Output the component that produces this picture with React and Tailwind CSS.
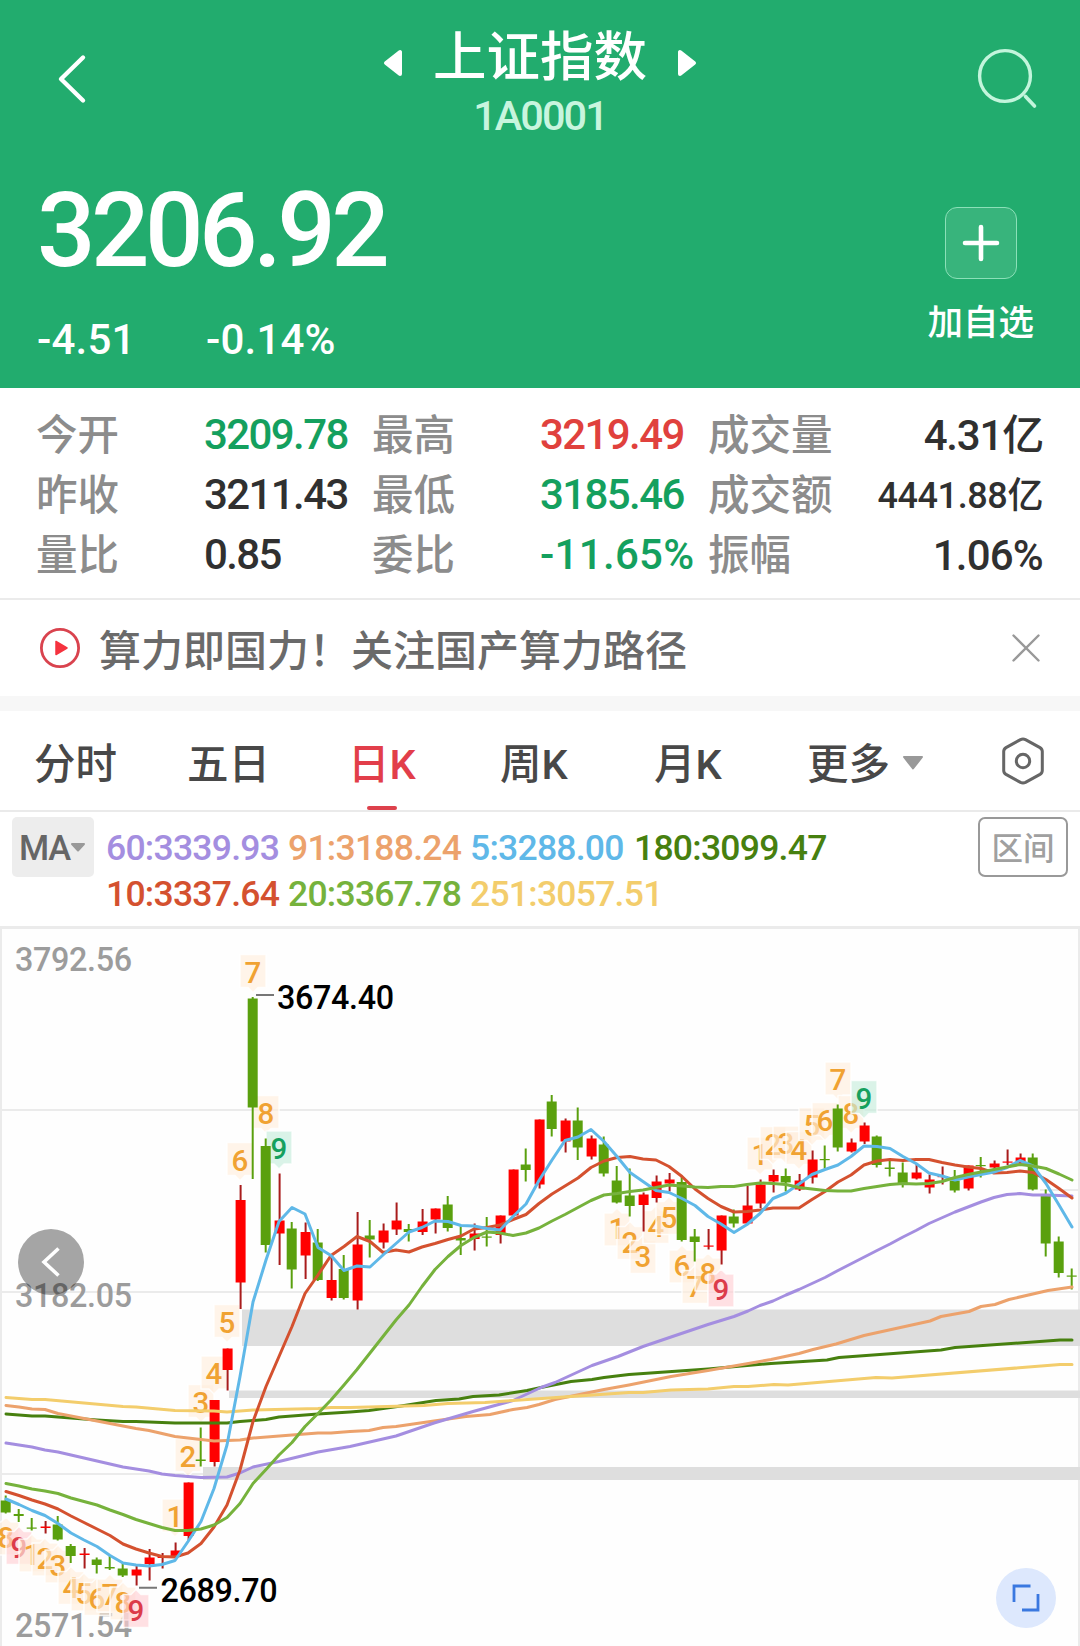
import { useState } from 'react';

const RED = '#ff0000';
const GREEN = '#5aa00e';

// [up, high, low, bodyTop, bodyBottom]
const candles = [
  [0, 1495.5, 1513.5, 1500.5, 1512.5], [0, 1509, 1522, 1514, 1516], [0, 1518, 1530.5, 1527.5, 1528.5],
  [1, 1521, 1533.5, 1526.5, 1528], [0, 1516, 1540.5, 1524.5, 1539.5], [0, 1544, 1563, 1546, 1556],
  [1, 1548, 1568.5, 1553.5, 1555], [0, 1557.5, 1573.5, 1559.5, 1565], [0, 1555, 1570, 1567, 1568.5],
  [0, 1563, 1577, 1568.5, 1575.5], [1, 1566, 1585.5, 1569.5, 1575.5], [1, 1549, 1580.5, 1557.5, 1564],
  [1, 1553, 1568.5, 1556.5, 1558], [1, 1542.5, 1557, 1550.5, 1557], [1, 1482.5, 1540, 1482.5, 1536],
  [0, 1427.5, 1466.5, 1459.5, 1461], [1, 1400, 1466.5, 1400, 1462], [1, 1348.5, 1390.5, 1348.5, 1370],
  [1, 1185, 1309, 1200, 1282.5], [0, 997, 1179, 998.5, 1107.5], [0, 1138.5, 1252.5, 1146, 1245],
  [1, 1173.5, 1265, 1220.5, 1233.5], [0, 1222, 1288.5, 1228.5, 1269.5], [1, 1222.5, 1279, 1232, 1255.5],
  [0, 1229, 1281, 1242.5, 1280], [1, 1255, 1300.5, 1280, 1298], [0, 1255, 1299.5, 1269, 1298],
  [1, 1212, 1309.5, 1244.5, 1300.5], [0, 1220, 1257.5, 1235.5, 1239.5], [1, 1223.5, 1248.5, 1230.5, 1242.5],
  [1, 1202.5, 1235, 1220.5, 1229.5], [0, 1224, 1241.5, 1229, 1232], [1, 1209, 1235, 1221.5, 1232],
  [1, 1208.5, 1233.5, 1208.5, 1219.5], [0, 1196, 1231.5, 1204.5, 1228], [0, 1225.5, 1255, 1238, 1240.5],
  [1, 1223.5, 1250.5, 1233.5, 1239], [0, 1217, 1246.5, 1236.5, 1237.5], [1, 1215.5, 1243.5, 1215.5, 1235],
  [1, 1169.5, 1215.5, 1169.5, 1215.5], [0, 1148.5, 1181.5, 1164.5, 1170], [1, 1119.5, 1188.5, 1119.5, 1184.5],
  [0, 1095, 1136.5, 1101.5, 1129], [1, 1118.5, 1152.5, 1120.5, 1141.5], [0, 1107.5, 1160, 1120.5, 1147.5],
  [1, 1135.5, 1159.5, 1138.5, 1156.5], [0, 1136.5, 1176.5, 1144.5, 1173.5], [0, 1166, 1203.5, 1180.5, 1202.5],
  [0, 1168.5, 1216.5, 1195.5, 1206], [1, 1192.5, 1231.5, 1194.5, 1205], [1, 1175.5, 1202.5, 1181.5, 1198],
  [1, 1173, 1191.5, 1179.5, 1183.5], [0, 1176.5, 1241.5, 1182, 1240], [0, 1229, 1261.5, 1236.5, 1242],
  [1, 1229, 1249.5, 1245.5, 1246.5], [1, 1215.5, 1264.5, 1215.5, 1250.5], [0, 1209.5, 1227.5, 1216.5, 1223.5],
  [1, 1186, 1223.5, 1205.5, 1223.5], [1, 1179.5, 1208, 1184.5, 1203.5], [1, 1169.5, 1192.5, 1175, 1181.5],
  [0, 1168.5, 1191.5, 1176, 1182.5], [1, 1174, 1191, 1180.5, 1189.5], [1, 1150.5, 1183.5, 1159.5, 1177.5],
  [0, 1145.5, 1168.5, 1159, 1160], [0, 1104.5, 1151.5, 1108.5, 1147.5], [1, 1138.5, 1152.5, 1142.5, 1151.5],
  [1, 1122.5, 1144, 1125.5, 1141.5], [0, 1135.5, 1167.5, 1136.5, 1165], [0, 1160.5, 1176.5, 1167.5, 1169],
  [0, 1162.5, 1187.5, 1172.5, 1183.5], [1, 1163.5, 1179.5, 1172.5, 1178.5], [1, 1174.5, 1193.5, 1179.5, 1187.5],
  [1, 1166.5, 1184.5, 1176, 1177], [0, 1170, 1192.5, 1180.5, 1190.5], [1, 1165.5, 1190.5, 1165.5, 1188.5],
  [0, 1157, 1177.5, 1165, 1166], [1, 1160.5, 1171, 1163.5, 1167.5], [1, 1149.5, 1165, 1161.5, 1162.5],
  [1, 1153.5, 1163.5, 1157.5, 1163.5], [0, 1153.5, 1190.5, 1157.5, 1189.5], [0, 1189.5, 1256.5, 1194.5, 1243.5],
  [0, 1236.5, 1277.5, 1241.5, 1273], [0, 1268.5, 1289.5, 1275.5, 1276.5],
];

// one value per candle
const ma5 = [
  1499, 1504.5, 1510.5, 1515.5, 1523.5, 1533, 1540, 1546.5, 1555.5, 1563, 1565, 1566, 1564.5, 1560.5, 1541.5, 1521.5,
  1488.5, 1445, 1376.5, 1302, 1260, 1221.5, 1207.5, 1214, 1247.5, 1255.5, 1270.5, 1266, 1267, 1255, 1243.5, 1232,
  1227.5, 1221, 1221.5, 1225.5, 1226, 1228.5, 1230, 1216.5, 1204, 1180.5, 1160, 1140.5, 1137, 1129.5, 1141.5, 1156.5,
  1172.5, 1181.5, 1190.5, 1192.5, 1198.5, 1205.5, 1216.5, 1224, 1232.5, 1224.5, 1213.5, 1198.5, 1193, 1184, 1174.5,
  1169.5, 1165, 1156.5, 1146, 1146.5, 1148.5, 1156.5, 1163.5, 1173, 1176, 1180, 1177, 1174.5, 1172, 1167.5, 1160.5,
  1166, 1183.5, 1205, 1227,
];
const ma10 = [
  1491.5, 1495.5, 1500, 1504, 1509, 1516, 1522.5, 1529, 1535.5, 1544, 1549, 1553, 1556.5, 1557, 1553, 1543.5, 1527,
  1505, 1470, 1421.5, 1386.5, 1356.5, 1326.5, 1293.5, 1275, 1255.5, 1246.5, 1236.5, 1241.5, 1252.5, 1250, 1252, 1247,
  1243.5, 1239.5, 1236, 1229, 1227.5, 1225, 1219.5, 1214.5, 1203.5, 1194, 1186, 1178, 1167.5, 1161, 1157.5, 1156.5,
  1159, 1160, 1166.5, 1176.5, 1189, 1198.5, 1206.5, 1212, 1211.5, 1210, 1208, 1208, 1208, 1199.5, 1191.5, 1182, 1175,
  1165, 1161, 1159.5, 1160.5, 1159.5, 1159.5, 1162.5, 1165, 1167, 1168.5, 1173, 1172.5, 1171, 1172.5, 1179.5, 1188.5,
  1198,
];
const ma20 = [
  1483.5, 1486, 1489, 1491, 1493.5, 1498, 1501.5, 1505, 1510, 1514.5, 1519.5, 1523.5, 1527.5, 1530.5, 1530.5, 1529,
  1525, 1517.5, 1503.5, 1483.5, 1469.5, 1455, 1442.5, 1426.5, 1413.5, 1400, 1385, 1369.5, 1353, 1336.5, 1320, 1305,
  1286.5, 1269.5, 1256.5, 1245.5, 1237.5, 1232, 1233, 1235.5, 1233, 1228, 1221, 1214.5, 1207.5, 1200.5, 1195, 1193.5,
  1191.5, 1190, 1187.5, 1185, 1186, 1187, 1187.5, 1186.5, 1186.5, 1184.5, 1183, 1183.5, 1184.5, 1187.5, 1189, 1190.5,
  1191, 1191, 1188.5, 1186.5, 1184.5, 1183.5, 1184, 1183.5, 1181.5, 1177.5, 1174.5, 1172, 1169.5, 1167, 1164.5, 1166,
  1168.5, 1174, 1180,
];

const ma60 =
  '6,1443 32,1447 45,1450 58,1452 84,1458 123,1467 149,1471 162,1474 175,1475.5 201,1477.5 227,1477 240,1473 253,1467 279,1461.5 318,1452 350,1446.5 396,1436 434,1423 473,1411.5 513,1400.5 541,1387.5 555,1382.5 592,1365.5 618,1356.5 643,1346.5 671,1337 708,1324.5 734,1316.5 748,1311 760,1305.5 773,1301 786,1295 799,1289.5 825,1277.5 838,1270.5 877,1250.5 890,1244 903,1237 916,1230.5 929,1223.5 955,1212 981,1202 994,1197.5 1007,1194.5 1020,1193.5 1033,1195 1046,1195 1072,1196';
const ma91 =
  '6,1405.5 19,1407 32,1409 45,1409.5 58,1413.5 97,1421 136,1428.5 149,1430.5 175,1436.5 188,1438 214,1441 240,1440 253,1438 292,1435 318,1433 331,1433 350,1431.5 369,1430.5 383,1427.5 396,1426.5 434,1421 466,1416.5 490,1414.5 513,1409.5 527,1407.5 539,1404.5 555,1399.5 604,1389.5 629,1385 671,1376.5 708,1370.5 771,1359.5 799,1353.5 813,1349.5 836,1344 864,1335.5 930,1321 941,1316.5 969,1311.5 981,1306.5 995,1304.5 1009,1299.5 1048,1290.5 1072,1287';
const ma180 =
  '6,1414 32,1416 45,1416 97,1420 123,1421.5 136,1421.5 149,1422 175,1423 227,1423 240,1421.5 266,1419.5 279,1417 318,1414 350,1412 369,1410.5 401,1406 436,1400.5 459,1399 473,1396.5 499,1395 527,1390.5 541,1387.5 571,1381.5 592,1379.5 604,1377.5 629,1374.5 708,1369 771,1363.5 827,1360 839,1357.5 941,1350 955,1347.5 1060,1340 1072,1340';
const ma251 =
  '6,1397.5 32,1399.5 45,1399.5 123,1406.5 136,1407 175,1410.5 214,1411 227,1412 253,1410 318,1408.5 331,1407.5 350,1407.5 424,1405.5 448,1403.5 485,1402.5 513,1400.5 571,1396.5 629,1392.5 643,1392.5 671,1390 708,1389 734,1386.5 748,1386.5 774,1384.5 788,1385 876,1377.5 892,1378 1060,1364.5 1072,1364.5';

// [candle index, digit, baseline, side, tone]
const badges = [
  [0, 8, 1548, 'b'], [1, 9, 1557.5, 'b', 'red'], [2, 1, 1565, 'b'], [3, 2, 1569, 'b'], [4, 3, 1576, 'b'],
  [5, 4, 1597.5, 'b'], [6, 5, 1604, 'b'], [7, 6, 1608.5, 'b'], [8, 7, 1605, 'b'], [9, 8, 1613, 'b'],
  [10, 9, 1620.5, 'b', 'red'],
  [13, 1, 1527, 't'], [14, 2, 1466.5, 't'], [15, 3, 1412.5, 't'], [16, 4, 1384, 't'], [17, 5, 1332.5, 't'],
  [18, 6, 1170.5, 't'], [19, 7, 982.5, 't'], [20, 8, 1123.5, 't'], [21, 9, 1159, 't', 'green'],
  [47, 1, 1239, 'b'], [48, 2, 1252.5, 'b'], [49, 3, 1266.5, 'b'], [50, 4, 1236.5, 'b'], [51, 5, 1227.5, 'b'],
  [52, 6, 1276, 'b'], [53, 7, 1296.5, 'b'], [54, 8, 1284, 'b'], [55, 9, 1300, 'b', 'red'],
  [58, 1, 1165, 't'], [59, 2, 1154.5, 't'], [60, 3, 1154, 't'], [61, 4, 1159.5, 't'], [62, 5, 1135.5, 't'],
  [63, 6, 1130.5, 't'], [64, 7, 1090, 't'], [65, 8, 1123.5, 't'], [66, 9, 1108.5, 't', 'green'],
];

const tones = {
  orange: { box: '#ffeedd', text: '#f0a232' },
  red: { box: '#ffcfd4', text: '#dc3c4a' },
  green: { box: '#c6ecdb', text: '#16a05e' },
};

const stats = [
  [
    ['今开', '3209.78', 'text-[#14a05e] tracking-[-1.6px]'],
    ['最高', '3219.49', 'text-[#e0413d] tracking-[-1.6px]'],
    ['成交量', '4.31亿', 'text-[42px] tracking-[-1.2px]'],
  ],
  [
    ['昨收', '3211.43', 'text-[#303030] tracking-[-1.6px]'],
    ['最低', '3185.46', 'text-[#14a05e] tracking-[-1.6px]'],
    ['成交额', '4441.88亿', 'text-[36px] tracking-[-0.4px]'],
  ],
  [
    ['量比', '0.85', 'text-[#303030] tracking-[-1.6px]'],
    ['委比', '-11.65%', 'text-[#14a05e] tracking-[0.3px]'],
    ['振幅', '1.06%', 'text-[42px] tracking-[-0.8px]'],
  ],
];

const legend = [
  ['60:3339.93', 'text-[#a48ee0]'],
  ['91:3188.24', 'text-[#eca26c]'],
  ['5:3288.00', 'text-[#5fb8e8]'],
  ['180:3099.47', 'text-[#47800f]'],
  ['10:3337.64', 'text-[#d4512f]'],
  ['20:3367.78', 'text-[#76b23c]'],
  ['251:3057.51', 'text-[#f3cd6c]'],
];

const tabs = [
  ['分时', 'w-[146px]', ''],
  ['五日', 'w-[161px]', 'ml-[7px]'],
  ['日K', 'w-[151px]', 'ml-[7px]'],
  ['周K', 'w-[154px]', 'ml-[8px]'],
  ['月K', 'w-[153px]', 'ml-[8px]'],
];

const xAt = (i) => 6 + i * 13;
const toPoints = (values) => values.map((y, i) => `${xAt(i)},${y}`).join(' ');

function Header() {
  return (
    <header className="h-[388px] bg-[#22ac6e] text-white">
      <div className="flex h-[158px] items-start justify-between pl-[56px] pr-[42px]">
        <svg className="mt-[53px]" width="34" height="52" viewBox="0 0 34 52" fill="none">
          <path d="M27 4.5 L5 26 L27 47.5" stroke="#fff" strokeWidth="4.4" strokeLinecap="round" strokeLinejoin="round" />
        </svg>
        <div className="flex flex-col items-center pl-[14px] pt-[20px]">
          <div className="flex items-center gap-[31px]">
            <svg className="mt-[9px]" width="19" height="28" viewBox="0 0 19 28">
              <path d="M17 3 V25 L3 14 Z" fill="#fff" stroke="#fff" strokeWidth="4" strokeLinejoin="round" />
            </svg>
            <h1 className="text-[53.5px] font-medium leading-[76px]">上证指数</h1>
            <svg className="mt-[9px]" width="19" height="28" viewBox="0 0 19 28">
              <path d="M2 3 V25 L16 14 Z" fill="#fff" stroke="#fff" strokeWidth="4" strokeLinejoin="round" />
            </svg>
          </div>
          <div className="mt-[-4px] text-[41.5px] font-medium leading-[48px] tracking-[-2px] text-[#c8f5de]">1A0001</div>
        </div>
        <svg className="mt-[47px]" width="62" height="64" viewBox="0 0 62 64" fill="none" stroke="#c3f5dc">
          <circle cx="29" cy="29" r="25.4" strokeWidth="3.4" />
          <path d="M49.5 49.5 L58.5 59" strokeWidth="3.6" strokeLinecap="round" />
        </svg>
      </div>
      <div className="flex justify-between pl-[37px] pr-[46px]">
        <div>
          <div className="mt-[13px] text-[103px] font-medium leading-[120px] tracking-[-4.5px]">3206.92</div>
          <div className="mt-[24px] flex text-[42px] font-medium leading-[50px] tracking-[0.2px]">
            <span className="w-[169px]">-4.51</span>
            <span>-0.14%</span>
          </div>
        </div>
        <div className="flex flex-col items-center pt-[49px]">
          <div className="flex h-[72px] w-[72px] items-center justify-center rounded-[12px] border-[1.5px] border-[#8be0b8] bg-[#38b47c]">
            <svg width="40" height="40" viewBox="0 0 40 40">
              <path d="M20 4 V36 M4 20 H36" stroke="#fff" strokeWidth="4.6" strokeLinecap="round" />
            </svg>
          </div>
          <div className="mt-[18px] text-[35.5px] font-medium leading-[52px]">加自选</div>
        </div>
      </div>
    </header>
  );
}

function Stats() {
  return (
    <section className="h-[212px] border-b-2 border-[#ebebeb] pl-[36px] pr-[37px] pt-[17px] text-[42px] font-medium">
      {stats.map((row) => (
        <div key={row[0][0]} className="grid h-[60px] grid-cols-[168px_168px_168px_168px_1fr] items-center whitespace-nowrap leading-[60px]">
          {row.slice(0, 2).map(([label, value, tone]) => (
            <div key={label} className="col-span-2 flex">
              <span className="w-[168px] pt-px text-[41.5px] text-[#8c8c8c]">{label}</span>
              <span className={tone}>{value}</span>
            </div>
          ))}
          <div className="flex w-[335px] items-center justify-between">
            <span className="pt-px text-[41.5px] text-[#8c8c8c]">{row[2][0]}</span>
            <span className={`text-[#303030] ${row[2][2]}`}>{row[2][1]}</span>
          </div>
        </div>
      ))}
    </section>
  );
}

function News() {
  return (
    <section className="flex h-[96px] items-center pl-[39px] pr-[38px]">
      <svg width="42" height="42" viewBox="0 0 42 42">
        <circle cx="21" cy="21" r="18.6" fill="none" stroke="#d9434e" strokeWidth="2.8" />
        <path d="M17 14.5 V27.5 L28 21 Z" fill="#f5333f" stroke="#f5333f" strokeWidth="1.5" strokeLinejoin="round" />
      </svg>
      <p className="ml-[18px] flex-1 pt-[8px] text-[42px] font-medium leading-[60px] text-[#6a6a6a]">算力即国力！关注国产算力路径</p>
      <svg width="32" height="32" viewBox="0 0 32 32">
        <path d="M3.5 3.5 L28.5 28.5 M28.5 3.5 L3.5 28.5" stroke="#999" strokeWidth="2.4" strokeLinecap="round" />
      </svg>
    </section>
  );
}

function Tabs() {
  const [active, setActive] = useState('日K');

  return (
    <nav className="flex h-[101px] items-stretch border-b-2 border-[#eaeaea] pl-[34px] text-[41.5px] font-medium text-[#484848]">
      {tabs.map(([name, width, offset]) => (
        <div key={name} className={width}>
          <button
            type="button"
            onClick={() => setActive(name)}
            className={`flex h-full flex-col items-center ${offset} ${active === name ? 'text-[#e23e4a]' : ''}`}
          >
            <span className="mt-[21px] block h-[74px] leading-[66px]">{name}</span>
            {active === name && <span className="h-[4px] w-[30px] rounded-full bg-[#dd414c]" />}
          </button>
        </div>
      ))}
      <div className="flex w-[200px] items-start pl-[8px]">
        <span className="mt-[21px] leading-[66px]">更多</span>
        <svg className="ml-[12px] mt-[44px]" width="22" height="16" viewBox="0 0 22 16">
          <path d="M2 2 H20 L11 13.5 Z" fill="#999" stroke="#999" strokeWidth="2" strokeLinejoin="round" />
        </svg>
      </div>
      <svg className="mt-[25px]" width="48" height="50" viewBox="0 0 48 50" fill="none" stroke="#666" strokeWidth="3">
        <path d="M21.5 3.6 Q24 2.4 26.5 3.6 L41 11.6 Q43.3 13 43.3 15.6 V34.4 Q43.3 37 41 38.4 L26.5 46.4 Q24 47.6 21.5 46.4 L7 38.4 Q4.7 37 4.7 34.4 V15.6 Q4.7 13 7 11.6 Z" />
        <circle cx="24" cy="25" r="6.7" />
      </svg>
    </nav>
  );
}

function Legend() {
  return (
    <section className="flex h-[114px] items-start pl-[12px] pr-[12px] pt-[5px]">
      <button type="button" className="flex h-[60px] w-[82px] items-center rounded-[5px] bg-[#ededed] pl-[7px] text-[34.5px] font-medium tracking-[-1.2px] text-[#666666]">
        <span className="pt-[4px]">MA</span>
        <svg className="shrink-0" width="16" height="11" viewBox="0 0 16 11">
          <path d="M2 2 H14 L8 8.5 Z" fill="#999" stroke="#999" strokeWidth="2" strokeLinejoin="round" />
        </svg>
      </button>
      <div className="ml-[12px] mt-[8px] grid flex-1 grid-cols-[182px_182px_164px_auto] text-[35.5px] font-medium leading-[46px] tracking-[-0.75px]">
        {legend.map(([text, tone]) => (
          <span key={text} className={`whitespace-nowrap ${tone}`}>
            {text}
          </span>
        ))}
      </div>
      <button type="button" className="h-[60px] w-[90px] rounded-[7px] border-2 border-[#999999] pt-[4px] text-[31.5px] font-medium leading-[54px] text-[#a0a0a0]">
        区间
      </button>
    </section>
  );
}

function Badge({ index, digit, baseline, side, tone = 'orange' }) {
  const x = xAt(index);
  const top = side === 't' ? baseline - 28 : baseline - 26;
  const bottom = top + 33;
  const d =
    side === 't'
      ? `M${x - 13} ${top} H${x + 13} V${bottom} H${x + 5} L${x} ${bottom + 5} L${x - 5} ${bottom} H${x - 13} Z`
      : `M${x - 13} ${top} H${x - 5} L${x} ${top - 5} L${x + 5} ${top} H${x + 13} V${bottom} H${x - 13} Z`;
  return (
    <g>
      <path d={d} fill={tones[tone].box} fillOpacity="0.65" stroke="#fff" strokeOpacity="0.8" strokeWidth="1.5" strokeLinejoin="round" />
      <text x={x} y={baseline} textAnchor="middle" fontSize="29.5" fontWeight="500" fill={tones[tone].text}>
        {digit}
      </text>
    </g>
  );
}

function Chart() {
  return (
    <section className="relative h-[720px] bg-[#fefefe]">
      <svg className="block" width="1080" height="720" viewBox="0 926 1080 720" fill="none">
        <path d="M0 927.5 H1080" stroke="#ebebeb" strokeWidth="3" />
        <path d="M1 926 V1646 M1079 926 V1646" stroke="#ebebeb" strokeWidth="2" />
        <path d="M0 1110 H1080 M0 1292 H1080 M0 1474 H1080 M1040 1190 H1080" stroke="#ebebeb" strokeWidth="2" />
        <g fill="#dedede">
          <rect x="242" y="1309.5" width="838" height="36.5" />
          <rect x="229" y="1390.5" width="851" height="7.5" />
          <rect x="203" y="1467" width="877" height="13" />
        </g>

        <g fontSize="32.3" fontWeight="500" fill="#9c9c9c" letterSpacing="-0.35">
          <text x="15" y="971">3792.56</text>
          <text x="15" y="1307">3182.05</text>
          <text x="15" y="1637">2571.54</text>
        </g>

        {badges.map(([index, digit, baseline, side, tone]) => (
          <Badge key={index} index={index} digit={digit} baseline={baseline} side={side} tone={tone} />
        ))}

        {candles.map(([up, high, low, top, bottom], i) => {
          const x = xAt(i) + (up ? 0.6 : -0.3);
          return (
            <g key={i}>
              <path d={`M${x} ${high} V${low}`} stroke={up ? '#a81c1c' : GREEN} strokeWidth="2" />
              <rect x={x - 5} y={top} width="10" height={Math.max(bottom - top, 1.2)} fill={up ? RED : GREEN} />
            </g>
          );
        })}

        <g strokeWidth="3" strokeLinejoin="round" strokeLinecap="round">
          <polyline points={ma180} stroke="#47800f" />
          <polyline points={ma91} stroke="#eca26c" />
          <polyline points={ma60} stroke="#a48ee0" />
          <polyline points={ma251} stroke="#f3cd6c" />
          <polyline points={toPoints(ma10)} stroke="#d4512f" />
          <polyline points={toPoints(ma5)} stroke="#5fb8e8" />
          <polyline points={toPoints(ma20)} stroke="#76b23c" />
        </g>

        <path d="M256 995 H274 M139 1587.7 H157" stroke="#777" strokeWidth="2" />
        <g fontSize="32.3" fontWeight="500" fill="#000" letterSpacing="-0.35">
          <text x="277" y="1009">3674.40</text>
          <text x="160.5" y="1602">2689.70</text>
        </g>
      </svg>

      <button type="button" className="absolute left-[18px] top-[303px] flex h-[66px] w-[66px] items-center justify-center rounded-full bg-black/35">
        <svg width="66" height="66" viewBox="0 0 66 66" fill="none">
          <path d="M40.5 19.5 L26 33 L40.5 46.5" stroke="#fff" strokeWidth="3.6" />
        </svg>
      </button>
      <button type="button" className="absolute left-[996px] top-[642px] h-[60px] w-[60px] rounded-full bg-[#dde8fd]">
        <svg width="60" height="60" viewBox="0 0 60 60" fill="none">
          <path d="M18 34 V18 H34.5 M42 26 V42 H26" stroke="#3a78e0" strokeWidth="2.8" />
        </svg>
      </button>
    </section>
  );
}

export default function App() {
  return (
    <main className="h-[1646px] w-[1080px] overflow-hidden bg-white font-['Roboto','Noto_Sans_CJK_SC',sans-serif]">
      <Header />
      <Stats />
      <News />
      <div className="h-[15px] bg-[#f7f7f7]" />
      <Tabs />
      <Legend />
      <Chart />
    </main>
  );
}
